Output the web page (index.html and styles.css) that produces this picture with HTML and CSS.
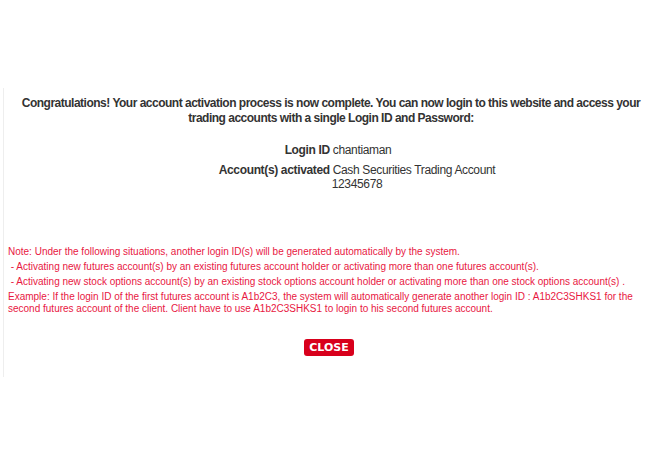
FILE: index.html
```html
<!DOCTYPE html>
<html lang="en">

<head>
    <meta charset="UTF-8">
    <title>Account Activation</title>
    <link rel="stylesheet" href="styles.css">
</head>

<body>
    <div class="box">
        <p class="title">Congratulations! Your account activation process is now complete. You can now login to this website and access your trading accounts with a single Login ID and Password:</p>
        <div class="info">
            <p class="line first"><b>Login ID</b> chantiaman</p>
            <p class="line second"><b>Account(s) activated</b> Cash Securities Trading Account<br>12345678</p>
        </div>
        <div class="note">
            <p>Note: Under the following situations, another login ID(s) will be generated automatically by the system.</p>
            <p>&nbsp;- Activating new futures account(s) by an existing futures account holder or activating more than one futures account(s).</p>
            <p>&nbsp;- Activating new stock options account(s) by an existing stock options account holder or activating more than one stock options account(s) .</p>
            <p>Example: If the login ID of the first futures account is A1b2C3, the system will automatically generate another login ID : A1b2C3SHKS1 for the second futures account of the client. Client have to use A1b2C3SHKS1 to login to his second futures account.</p>
        </div>
        <div class="btns"><a class="close" href="#">CLOSE</a></div>
    </div>
</body>

</html>
```

FILE: styles.css
```css
* {
    padding: 0;
    margin: 0;
}
body {
    background: #fff;
    font-family: "Liberation Sans", Arial, sans-serif;
}
.box {
    margin: 88px 0 0 3px;
    padding: 8px 0 20px 4px;
    border-left: 1px solid #eee;
}
.title {
    font-size: 12px;
    font-weight: bold;
    line-height: 15px;
    letter-spacing: -0.5px;
    color: #333;
    text-align: center;
    padding-left: 4px;
}
.info {
    padding-top: 17px;
    font-size: 12px;
    letter-spacing: -0.35px;
    color: #333;
}
.line {
    text-align: center;
    line-height: 14px;
    padding-bottom: 5px;
}
.line.first {
    padding-bottom: 6px;
    padding-left: 18px;
}
.line.second {
    padding-left: 56px;
}
.note {
    padding-top: 50px;
    color: #e8173f;
    font-size: 10px;
    line-height: 12px;
}
.note p {
    padding-bottom: 3px;
}
.btns {
    padding-top: 21px;
    text-align: center;
}
.close {
    display: inline-block;
    vertical-align: top;
    width: 50px;
    height: 17px;
    line-height: 17px;
    background: #d8001c;
    border-radius: 3px;
    color: #fff;
    font-family: "DejaVu Sans", Verdana, sans-serif;
    font-size: 11px;
    font-weight: bold;
    text-decoration: none;
}
```
